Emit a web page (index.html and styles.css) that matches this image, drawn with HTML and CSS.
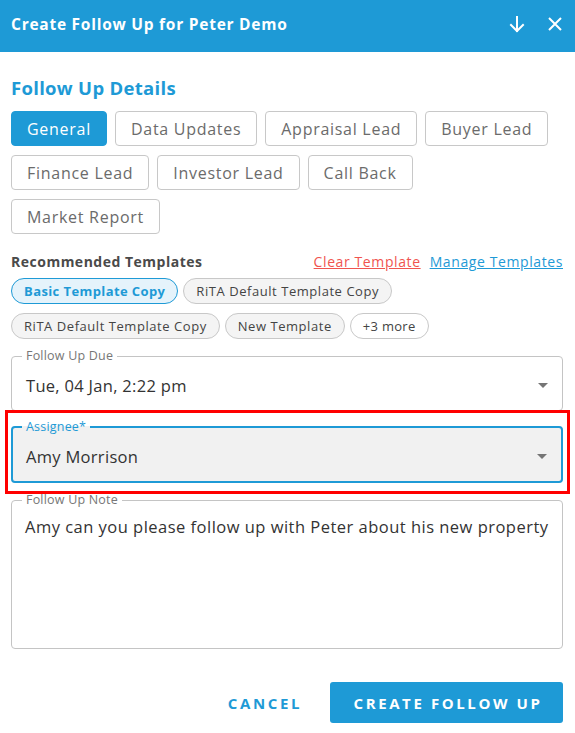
FILE: index.html
```html
<!DOCTYPE html>
<html>
<head>
<meta charset="utf-8">
<link rel="stylesheet" href="styles.css">
</head>
<body>
<div class="dialog">
  <header class="topbar">
    <h1 class="title">Create Follow Up for Peter Demo</h1>
    <div class="top-actions">
      <svg class="ico" width="18" height="18" viewBox="0 0 18 18"><path d="M9 2v14M3 10l6 6 6-6" fill="none" stroke="#fff" stroke-width="2" stroke-linecap="square"/></svg>
      <svg class="ico" width="18" height="18" viewBox="0 0 18 18"><path d="M3 3l12 12M15 3L3 15" fill="none" stroke="#fff" stroke-width="2"/></svg>
    </div>
  </header>
  <main class="content">
    <h2 class="section-title">Follow Up Details</h2>
    <div class="tabs">
      <button class="tab active">General</button>
      <button class="tab">Data Updates</button>
      <button class="tab">Appraisal Lead</button>
      <button class="tab">Buyer Lead</button>
      <button class="tab">Finance Lead</button>
      <button class="tab">Investor Lead</button>
      <button class="tab">Call Back</button>
      <button class="tab">Market Report</button>
    </div>
    <div class="tpl-head">
      <span class="tpl-title">Recommended Templates</span>
      <span class="tpl-links"><a class="link red">Clear Template</a><a class="link blue">Manage Templates</a></span>
    </div>
    <div class="chips">
      <span class="chip selected">Basic Template Copy</span>
      <span class="chip">RiTA Default Template Copy</span>
      <span class="chip">RiTA Default Template Copy</span>
      <span class="chip">New Template</span>
      <span class="chip plain">+3 more</span>
    </div>
    <fieldset class="field due">
      <legend>Follow Up Due</legend>
      <div class="field-row"><span class="value">Tue, 04 Jan, 2:22 pm</span><span class="caret"></span></div>
    </fieldset>
    <div class="highlight-wrap">
      <fieldset class="field assignee">
        <legend>Assignee*</legend>
        <div class="field-row"><span class="value">Amy Morrison</span><span class="caret"></span></div>
      </fieldset>
      <div class="highlight"></div>
    </div>
    <fieldset class="field note">
      <legend>Follow Up Note</legend>
      <div class="note-text">Amy can you please follow up with Peter about his new property</div>
    </fieldset>
    <div class="actions">
      <button class="btn-text">CANCEL</button>
      <button class="btn-primary">CREATE FOLLOW UP</button>
    </div>
  </main>
</div>
</body>
</html>
```

FILE: styles.css
```css
* { box-sizing: border-box; }
body {
  margin: 0;
  font-family: "Open Sans", "DejaVu Sans", sans-serif;
  background: #fff;
  color: #444;
}
.dialog { width: 575px; }
.topbar {
  height: 52px;
  background: #1e9ad6;
  display: flex;
  align-items: center;
  justify-content: space-between;
  padding: 0 11px 4px 11px;
}
.title {
  margin: 0;
  font-size: 15.5px;
  font-weight: 700;
  color: #fff;
  letter-spacing: 0.75px;
}
.top-actions { display: flex; gap: 20px; align-items: center; padding-right: 0; }
.ico { display: block; }
.content { padding: 0 12px 0 11px; }
.section-title {
  margin: 24px 0 11px 0;
  font-size: 18.5px;
  line-height: 24px;
  font-weight: 700;
  color: #1e9ad6;
  letter-spacing: 0.3px;
}
.tabs { display: flex; flex-wrap: wrap; column-gap: 8px; row-gap: 9px; width: 552px; }
.tab {
  height: 35px;
  padding: 0 15px;
  border: 1px solid #c8c8c8;
  border-radius: 4px;
  background: #fff;
  color: #6b6b6b;
  font-family: inherit;
  font-size: 16px;
  letter-spacing: 0.72px;
}
.tab.active { background: #1e9ad6; border-color: #1e9ad6; color: #fff; }
.tpl-head {
  display: flex;
  justify-content: space-between;
  align-items: center;
  margin-top: 18px;
  height: 18px;
}
.tpl-title { font-size: 14px; font-weight: 700; color: #4a4a4a; letter-spacing: 0.5px; }
.tpl-links { display: flex; gap: 9px; font-size: 14px; letter-spacing: 0.6px; }
.link { text-decoration: underline; }
.link.red { color: #f0544f; }
.link.blue { color: #1e9ad6; }
.chips { display: flex; flex-wrap: wrap; column-gap: 5px; row-gap: 9px; margin-top: 8px; width: 430px; }
.chip {
  height: 26px;
  line-height: 24px;
  padding: 0 12px;
  border: 1px solid #c8c8c8;
  border-radius: 13px;
  background: #f4f4f4;
  font-size: 13px;
  color: #444;
  letter-spacing: 0.55px;
}
.chip.selected { background: #e5f3fb; border-color: #1e9ad6; color: #1e9ad6; font-weight: 700; letter-spacing: 0.4px; }
.chip.plain { background: #fff; letter-spacing: 0.3px; }
.field {
  margin: 0;
  padding: 0 13px 0 10px;
  border: 1px solid #c4c4c4;
  border-radius: 4px;
  min-width: 0;
}
.field legend {
  padding: 0 4px;
  font-size: 12.5px;
  line-height: 14px;
  color: #777;
  letter-spacing: 0.2px;
}
.field.due { margin-top: 10px; height: 62px; }
.field-row {
  display: flex;
  align-items: center;
  justify-content: space-between;
  height: 47px;
  padding-left: 4px;
  padding-bottom: 2px;
}
.value { font-size: 16.5px; color: #333; letter-spacing: 0.3px; }
.caret {
  width: 0; height: 0;
  border-left: 5px solid transparent;
  border-right: 5px solid transparent;
  border-top: 5px solid #757575;
  margin-right: 1px;
}
.highlight-wrap { position: relative; margin-top: 9px; }
.field.assignee {
  border: 2px solid #1e9ad6;
  background: #f1f1f1;
  height: 63px;
  padding-left: 9px;
}
.field.assignee legend { color: #1e9ad6; }
.field.assignee .field-row { height: 47px; }
.highlight {
  position: absolute;
  top: -10px; left: -6px; right: -7px; bottom: -11px;
  border: 3px solid #ff0000;
  pointer-events: none;
}
.field.note { margin-top: 10px; height: 156px; }
.note-text { font-size: 16.5px; color: #333; padding: 8px 0 0 3px; letter-spacing: 0.48px; white-space: nowrap; }
.actions {
  display: flex;
  justify-content: flex-end;
  align-items: center;
  gap: 28px;
  margin-top: 33px;
}
.btn-text, .btn-primary {
  font-family: inherit;
  font-size: 15px;
  font-weight: 700;
  letter-spacing: 2.6px;
  border: none;
}
.btn-text { background: none; color: #1e9ad6; padding: 0; }
.btn-primary {
  width: 233px;
  height: 41px;
  background: #1e9ad6;
  color: #fff;
  border-radius: 3px;
  padding: 0 0 0 3px;
}
```
